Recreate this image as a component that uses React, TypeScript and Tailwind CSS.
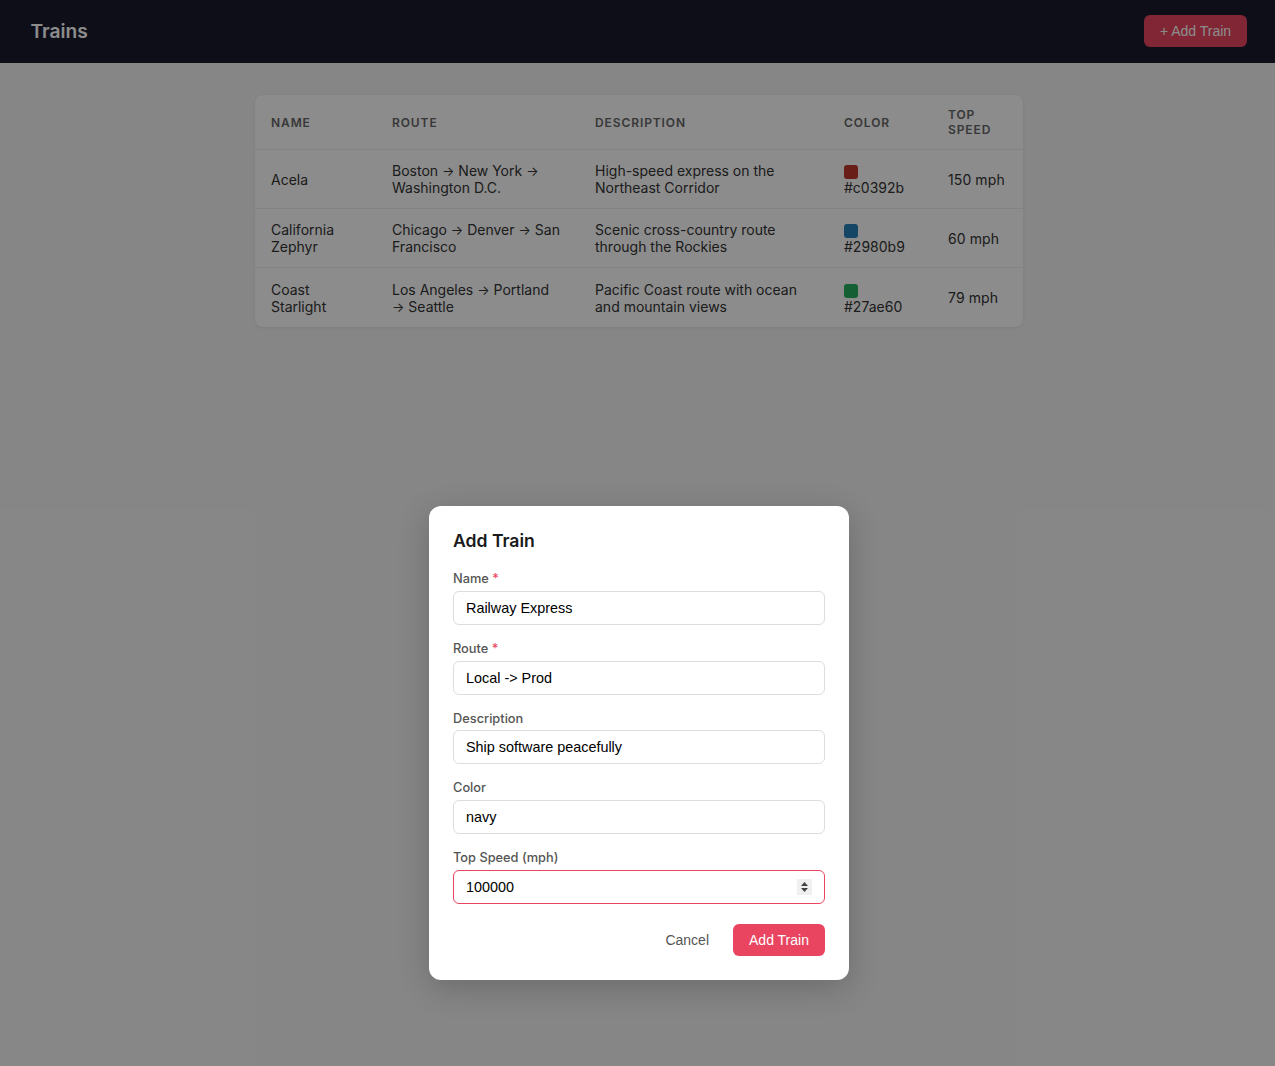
const font = "[font-family:Inter,'Liberation_Sans',sans-serif]";

const trains = [
  { name: "Acela", route: ["Boston ", " New York ", " Washington D.C."], description: "High-speed express on the Northeast Corridor", color: "#c0392b", speed: "150 mph", row: "h-[59px] border-b border-[#eee]", cell: "py-0" },
  { name: "California Zephyr", route: ["Chicago ", " Denver ", " San", "Francisco"], description: "Scenic cross-country route through the Rockies", color: "#2980b9", speed: "60 mph", row: "h-[59px] border-b border-[#eee]", cell: "py-0" },
  { name: "Coast Starlight", route: ["Los Angeles ", " Portland ", " Seattle"], description: "Pacific Coast route with ocean and mountain views", color: "#27ae60", speed: "79 mph", row: "h-[59px]", cell: "pt-[2px] pb-0" },
];

function Field({ label, value, required, focused, number }: { label: string; value: string; required?: boolean; focused?: boolean; number?: boolean }) {
  return (
    <div className="mb-4 flex flex-col">
      <label className="mb-1 text-[12.8px] leading-[15.7px] font-medium text-[#555]">
        {label}
        {required && <span className="text-[#e94560]"> *</span>}
      </label>
      <div className="relative">
        <input
          readOnly
          value={value}
          className={`h-[34px] w-full rounded-md border px-3 text-[14.4px] text-black outline-none [font-family:'Liberation_Sans',Arial,sans-serif] ${focused ? "border-[#e94560]" : "border-[#ddd]"}`}
        />
        {number && (
          <span className="absolute top-[9px] right-[13px] flex h-4 w-[15px] items-center justify-center bg-[#f0f0f0]">
            <svg width="9" height="12" viewBox="0 0 9 12" fill="#444">
              <path d="M4.5 1 8 5H1z" />
              <path d="M4.5 11 1 7h7z" />
            </svg>
          </span>
        )}
      </div>
    </div>
  );
}

export default function App() {
  return (
    <div className={`relative min-h-[1066px] bg-[#f5f5f5] text-[#333] ${font}`}>
      <header className="flex h-[63px] items-center justify-between bg-[#1a1a2e] pr-[28px] pb-px pl-[30.5px]">
        <h1 className="text-[19.2px] font-semibold text-white">Trains</h1>
        <button className="h-8 w-[103px] rounded-md bg-[#e94560] text-[14px] text-white [font-family:'Liberation_Sans',Arial,sans-serif]">
          + Add Train
        </button>
      </header>

      <main className="flex justify-center pt-8 pl-[3px]">
        <div className="w-[768px] overflow-hidden rounded-lg bg-white shadow-[0_1px_4px_rgba(0,0,0,0.08)]">
          <table className="w-full table-fixed border-collapse text-left text-[14px] leading-[17px]">
            <colgroup>
              <col className="w-[121px]" />
              <col className="w-[203px]" />
              <col className="w-[249px]" />
              <col className="w-[104px]" />
              <col className="w-[91px]" />
            </colgroup>
            <thead>
              <tr className="h-[54px] border-b border-[#eee] text-[12px] leading-[15px] font-semibold tracking-[0.9px] text-[#666] uppercase">
                <th className="px-4 py-3 font-semibold">Name</th>
                <th className="px-4 py-3 font-semibold">Route</th>
                <th className="px-4 py-3 font-semibold">Description</th>
                <th className="px-4 py-3 font-semibold">Color</th>
                <th className="px-4 py-3 font-semibold">Top Speed</th>
              </tr>
            </thead>
            <tbody>
              {trains.map((t) => (
                <tr key={t.name} className={t.row}>
                  <td className={`px-4 ${t.cell}`}>{t.name}</td>
                  <td className={`px-4 ${t.cell}`}>
                    {t.route[0]}
                    <span className="text-[13px] leading-none">→</span>
                    {t.route[1]}
                    <span className="text-[13px] leading-none">→</span>
                    {t.route[2]}
                    {t.route[3] && <br />}
                    {t.route[3]}
                  </td>
                  <td className={`px-4 ${t.cell}`}>{t.description}</td>
                  <td className={`px-4 ${t.cell}`}>
                    <span className="mr-[6px] inline-block h-[14px] w-[14px] rounded-[3px] align-middle" style={{ backgroundColor: t.color }} />
                    {t.color}
                  </td>
                  <td className="py-0 pl-4 tracking-[0.1px]">{t.speed}</td>
                </tr>
              ))}
            </tbody>
          </table>
        </div>
      </main>

      <div className="absolute inset-0 flex items-start justify-center bg-black/45 pt-[506px] pl-[3px]">
        <div className="w-[420px] rounded-xl bg-white p-6 shadow-[0_8px_32px_rgba(0,0,0,0.2)]">
          <h2 className="mb-[19.1px] text-[17.6px] leading-[22px] font-semibold text-[#1a1a1a]">Add Train</h2>
          <Field label="Name" value="Railway Express" required />
          <Field label="Route" value="Local -> Prod" required />
          <Field label="Description" value="Ship software peacefully" />
          <Field label="Color" value="navy" />
          <Field label="Top Speed (mph)" value="100000" focused number />
          <div className="mt-[4.4px] flex items-center justify-end gap-2 pt-1 [font-family:'Liberation_Sans',Arial,sans-serif]">
            <button className="h-8 px-4 pt-px text-[14px] text-[#555]">Cancel</button>
            <button className="h-8 w-[92px] rounded-md bg-[#e94560] pt-px text-[14px] text-white">Add Train</button>
          </div>
        </div>
      </div>
    </div>
  );
}
